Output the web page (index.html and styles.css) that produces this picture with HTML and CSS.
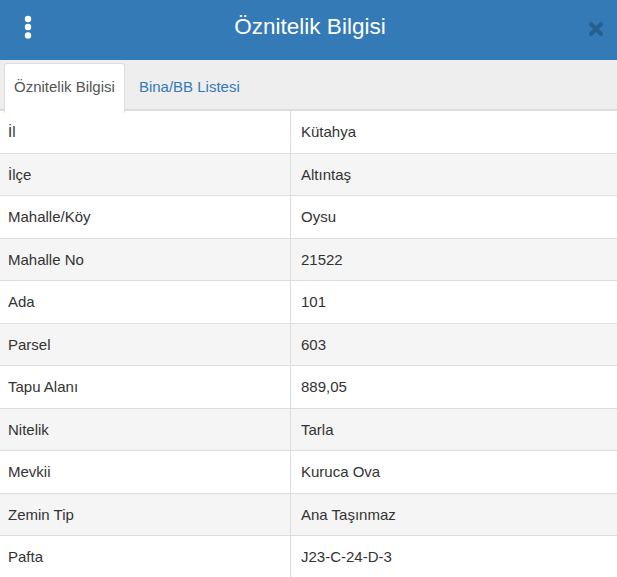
FILE: index.html
```html
<!DOCTYPE html>
<html>
<head>
    <meta charset="utf-8">
    <link rel="stylesheet" href="styles.css">
</head>
<body>

<div class="panel">
    <div class="panel-header">
        <span class="menu-btn">
            <svg width="8" height="24" viewBox="0 0 8 24">
                <circle cx="4" cy="4" r="3.2" fill="#fff"/>
                <circle cx="4" cy="12" r="3.2" fill="#fff"/>
                <circle cx="4" cy="20.5" r="3.2" fill="#fff"/>
            </svg>
        </span>
        <h1 class="panel-title">Öznitelik Bilgisi</h1>
        <span class="close-btn">
            <svg width="16" height="16" viewBox="0 0 16 16">
                <path d="M3 3 L13 13 M13 3 L3 13" stroke="#285f91" stroke-width="4" stroke-linecap="round"/>
            </svg>
        </span>
    </div>

    <ul class="tabs">
        <li class="tab active"><a href="#">Öznitelik Bilgisi</a></li>
        <li class="tab"><a href="#">Bina/BB Listesi</a></li>
    </ul>

    <table class="attr-table">
        <tr><td>İl</td><td>Kütahya</td></tr>
        <tr><td>İlçe</td><td>Altıntaş</td></tr>
        <tr><td>Mahalle/Köy</td><td>Oysu</td></tr>
        <tr><td>Mahalle No</td><td>21522</td></tr>
        <tr><td>Ada</td><td>101</td></tr>
        <tr><td>Parsel</td><td>603</td></tr>
        <tr><td>Tapu Alanı</td><td>889,05</td></tr>
        <tr><td>Nitelik</td><td>Tarla</td></tr>
        <tr><td>Mevkii</td><td>Kuruca Ova</td></tr>
        <tr><td>Zemin Tip</td><td>Ana Taşınmaz</td></tr>
        <tr><td>Pafta</td><td>J23-C-24-D-3</td></tr>
    </table>
</div>

</body>
</html>
```

FILE: styles.css
```css
body {
    margin: 0;
    font-family: "Liberation Sans", Arial, sans-serif;
    color: #333;
    background: #fff;
}

.panel-header {
    height: 60px;
    background-color: #337ab7;
    display: flex;
    align-items: center;
    justify-content: space-between;
    padding: 0 13px 0 24px;
}

.menu-btn {
    display: flex;
    margin-top: -6px;
}

.close-btn {
    display: flex;
    margin-top: -3px;
}

.panel-title {
    margin: 0 0 6px 0;
    font-size: 22.5px;
    font-weight: normal;
    color: #fff;
}

.tabs {
    list-style-type: none;
    margin: 0;
    padding: 3px 0 0 4px;
    background-color: #eee;
    border-bottom: 2px solid #ddd;
    display: flex;
    height: 46px;
}

.tab a {
    display: block;
    padding: 14px 9px 0;
    height: 33px;
    font-size: 15px;
    text-decoration: none;
    color: #337ab7;
    border: 1px solid transparent;
    border-radius: 3px 3px 0 0;
    margin-right: 4px;
}

.tab.active a {
    background-color: #fff;
    color: #555;
    border-color: #ddd;
    border-bottom-color: #fff;
    height: 34px;
}

.attr-table {
    width: 100%;
    border-collapse: collapse;
    font-size: 15px;
    line-height: 21.5px;
}

.attr-table td {
    padding: 10px 8px;
    border-bottom: 1px solid #ddd;
}

.attr-table td:first-child {
    width: 274px;
    border-right: 1px solid #ddd;
}

.attr-table td:last-child {
    padding-left: 10px;
}

.attr-table tr:nth-child(even) td {
    background-color: #f5f5f5;
}
```
